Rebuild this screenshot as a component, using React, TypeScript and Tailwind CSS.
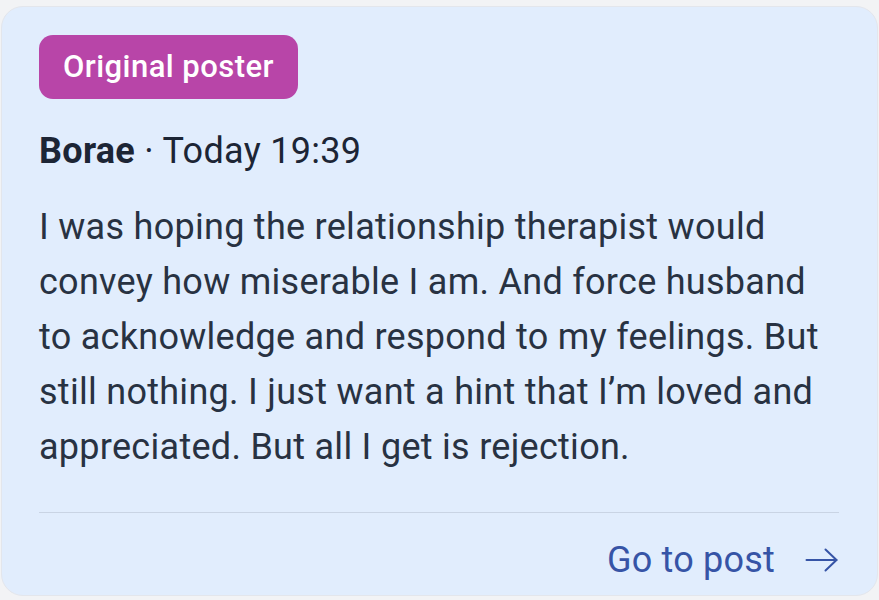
export default function App() {
  return (
    <div className="min-h-screen bg-[#f2f3f5] pt-[6px] px-[1px] font-['Roboto','Liberation_Sans',sans-serif]">
      <div className="h-[590px] rounded-[22px] border border-[#e3e6ec] bg-[#e1edfd] pl-[37px] pr-[38px] pt-[28px]">
        <div className="inline-flex h-[64px] items-center rounded-[14px] bg-[#b845a8] px-[24px] text-[31px] font-medium tracking-[0.45px] text-white">
          Original poster
        </div>

        <div className="mt-[30px] text-[36px] leading-[44px] tracking-[0.3px] text-[#1c2535]">
          <span className="font-bold">Borae</span> · Today 19:39
        </div>

        <p className="mt-[27px] text-[36px] leading-[55px] tracking-[0.28px] text-[#283242]">
          I was hoping the relationship therapist would convey how miserable I am. And force husband to
          acknowledge and respond to my feelings. But still nothing. I just want a hint that I’m loved and
          appreciated. But all I get is rejection.
        </p>

        <div className="mt-[37px] border-t border-[#c9d4e4]" />

        <div className="mt-[25px] flex items-center justify-end gap-[30px] text-[36px] leading-[44px] tracking-[0.2px] text-[#3654a6]">
          <span>Go to post</span>
          <svg width="33" height="24" viewBox="0 0 33 24" fill="none" stroke="currentColor" strokeWidth="2" strokeLinecap="round" strokeLinejoin="round" className="mr-[1px]">
            <path d="M1.5 12h30" />
            <path d="M20.5 1.5l11 10.5-11 10.5" />
          </svg>
        </div>
      </div>
    </div>
  );
}
